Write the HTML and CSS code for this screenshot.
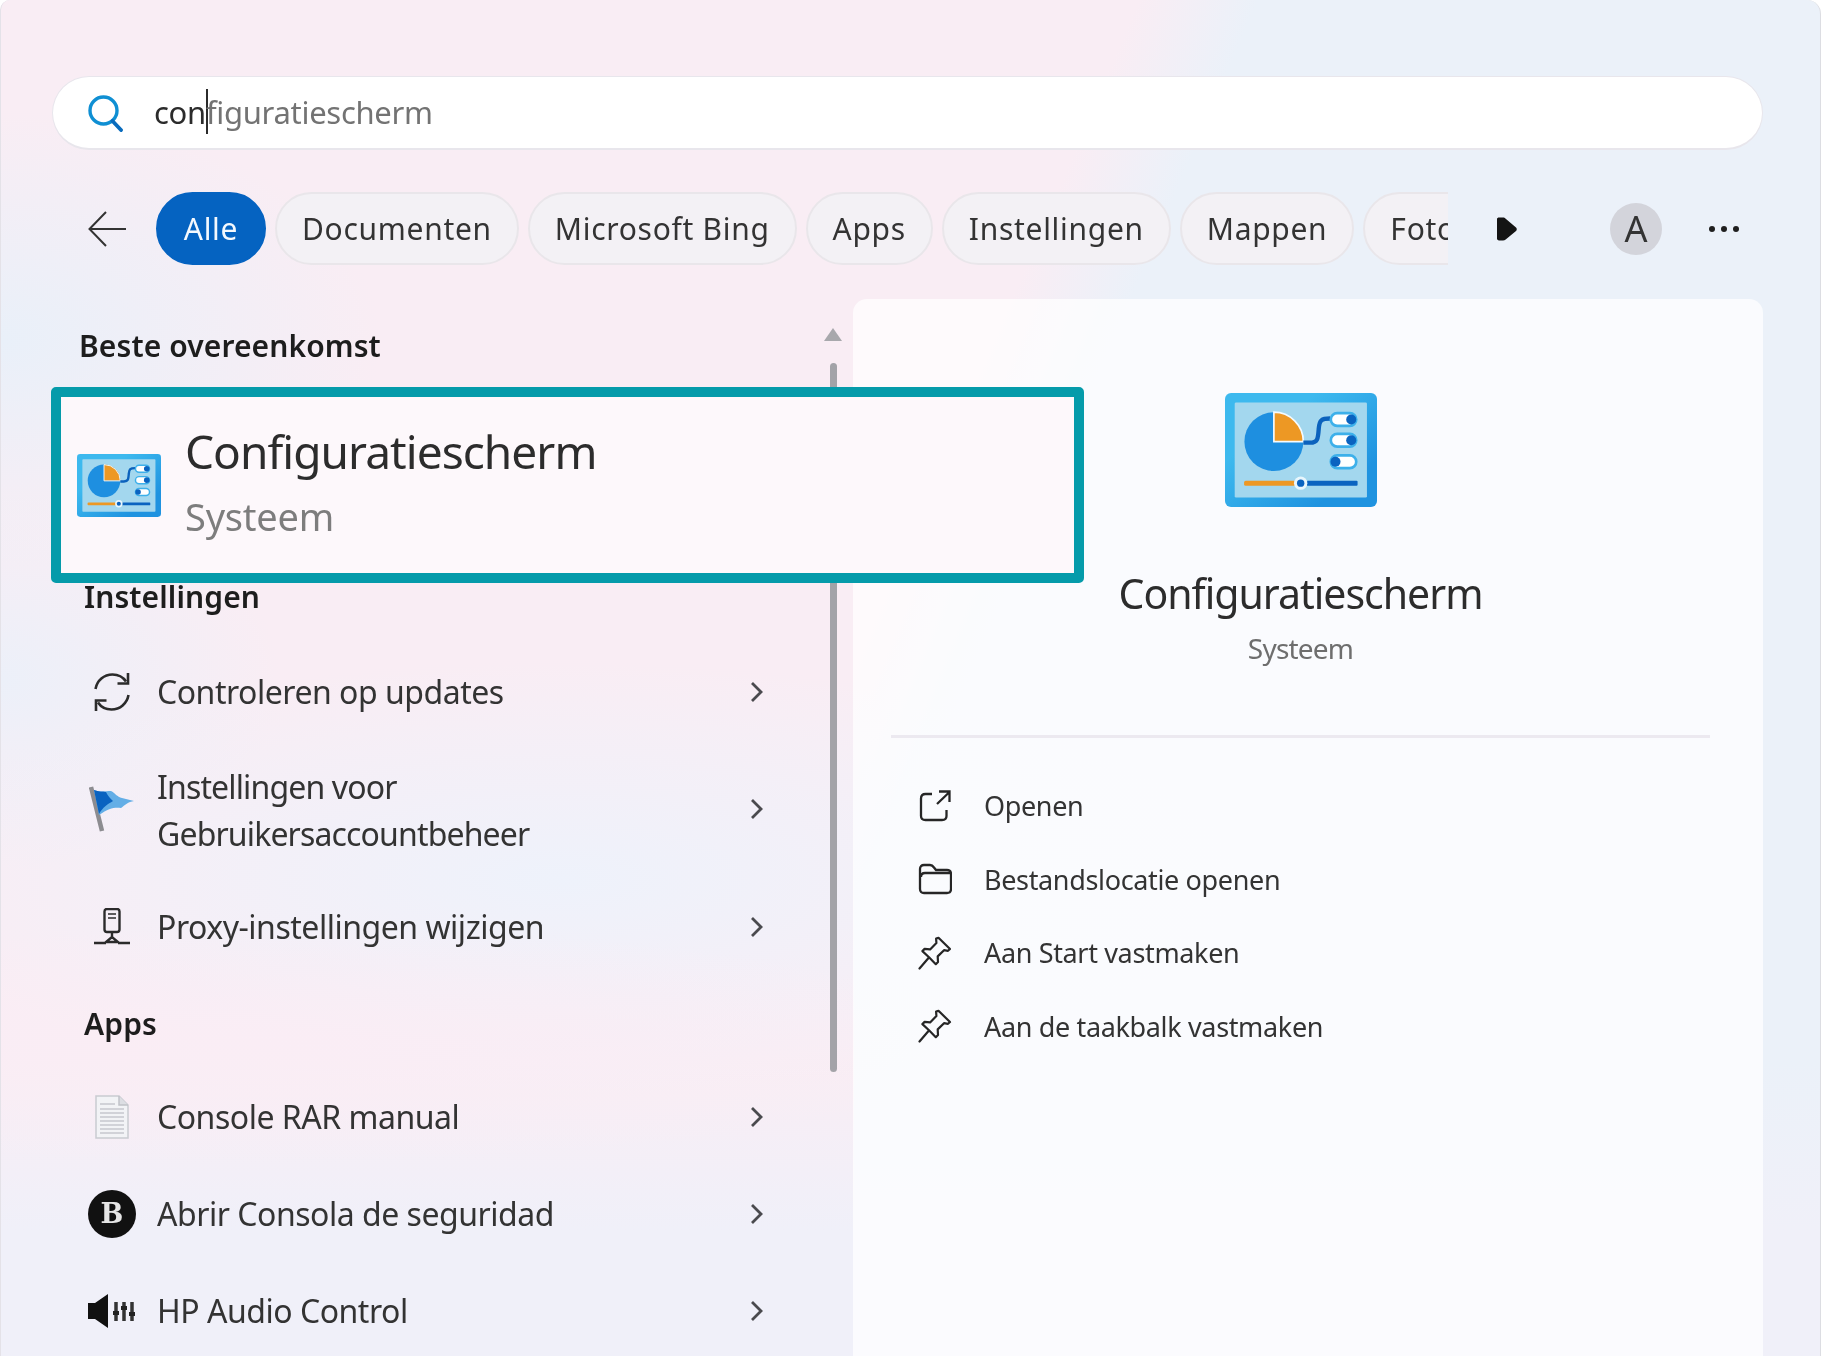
FILE: index.html
```html
<!DOCTYPE html>
<html lang="nl">
<head>
<meta charset="utf-8">
<title>Zoeken</title>
<link rel="stylesheet" href="styles.css">
</head>
<body>
<svg class="defs" width="0" height="0" aria-hidden="true">
  <defs>
    <linearGradient id="cpFrame" x1="0" y1="0" x2="1" y2="1">
      <stop offset="0.3" stop-color="#3db9ee"/><stop offset="0.8" stop-color="#1f93e0"/>
    </linearGradient>
    <symbol id="cp" viewBox="0 0 454 340">
      <rect width="454" height="340" rx="18" fill="url(#cpFrame)"/>
      <rect x="29" y="28" width="395" height="284" rx="4" fill="#a3d7ee"/>
      <circle cx="146" cy="145" r="88" fill="#1e8fe0"/>
      <path d="M146 145V57a88 88 0 0 1 88 88z" fill="#ed9824" stroke="#f4fbff" stroke-width="5"/>
      <path d="M234 148h20c24 0 24-14 26-42 2-26 8-30 34-30" fill="none" stroke="#0b62bd" stroke-width="13"/>
      <g fill="#fff" stroke="#3db0ea" stroke-width="8">
        <rect x="316" y="60" width="76" height="38" rx="19"/>
        <rect x="316" y="122" width="76" height="38" rx="19"/>
        <rect x="316" y="186" width="76" height="38" rx="19"/>
      </g>
      <g fill="#0a63c0">
        <circle cx="377" cy="79" r="15"/><circle cx="377" cy="141" r="15"/><circle cx="330" cy="205" r="15"/>
      </g>
      <rect x="57" y="262" width="155" height="15" rx="5" fill="#ed9824"/>
      <rect x="244" y="262" width="152" height="15" rx="3" fill="#0a63c0"/>
      <circle cx="226" cy="269" r="20" fill="#e8f6fc"/>
      <circle cx="226" cy="269" r="11" fill="#0a63c0"/>
    </symbol>
    <symbol id="pin" viewBox="0 0 34 34">
      <path d="M20.500 1.800 32 13l-2 1.800-4-.6-6.300 6.200.3 5.600-2.200 2.200-6.800-6.900-6.600-6.200 2.200-2.200 5.500.5 6.300-6.400-.3-4.400z" fill="none" stroke="#262626" stroke-width="2.200" stroke-linejoin="round"/>
      <path d="M10.500 22 1.500 32.500" fill="none" stroke="#262626" stroke-width="2.200" stroke-linecap="round"/>
    </symbol>
    <symbol id="chev" viewBox="0 0 15 22">
      <path d="M3 2l9 9-9 9" fill="none" stroke="#4a4a4e" stroke-width="2.800"/>
    </symbol>
  </defs>
</svg>

<div class="window">
  <div class="search">
    <svg class="search-icon" viewBox="0 0 36 38" aria-hidden="true">
      <circle cx="16.500" cy="16.500" r="13.500" fill="none" stroke="#0f8fd3" stroke-width="3.400"/>
      <path d="M25.500 27 34 36" fill="none" stroke="#0a6cbd" stroke-width="3.800" stroke-linecap="round"/>
    </svg>
    <div class="query"><span class="typed">con</span><span class="caret"></span><span class="rest">figuratiescherm</span></div>
  </div>

  <div class="filters">
    <svg class="back" viewBox="0 0 38 36" aria-hidden="true">
      <path d="M18 1 1.500 18 18 35M2 18h36" fill="none" stroke="#333" stroke-width="2"/>
    </svg>
    <div class="chips">
      <span class="chip chip-active">Alle</span>
      <span class="chip">Documenten</span>
      <span class="chip">Microsoft Bing</span>
      <span class="chip">Apps</span>
      <span class="chip">Instellingen</span>
      <span class="chip">Mappen</span>
      <span class="chip">Foto's</span>
    </div>
    <svg class="more-arrow" viewBox="0 0 22 26" aria-hidden="true">
      <path d="M3 1.500h4c1 0 2 .5 2.700 1.300L20 11.500c1 1 1 2.500 0 3.500L9.700 23.500c-.7.7-1.700 1-2.700 1H3c-1 0-2-.8-2-2V3c0-1 1-1.500 2-1.500z" fill="#141414"/>
    </svg>
    <span class="avatar">A</span>
    <span class="dots"><i></i><i></i><i></i></span>
  </div>

  <div class="content">
    <div class="results">
      <div class="scroll-arrow"></div>
      <div class="scroll-thumb"></div>

      <h2 class="heading heading-best">Beste overeenkomst</h2>
      <div class="best">
        <svg class="best-icon" aria-hidden="true"><use href="#cp"/></svg>
        <div class="best-text">
          <div class="best-title">Configuratiescherm</div>
          <div class="best-sub">Systeem</div>
        </div>
      </div>

      <h2 class="heading heading-set">Instellingen</h2>
      <ul class="rows rows-set">
        <li class="row">
          <span class="row-icon">
            <svg class="ic-sync" viewBox="0 0 40 40" aria-hidden="true">
              <path d="M3.500 17C5 8.500 12 2.500 20.500 2.500c5.500 0 10.500 2.500 13.500 7M36.500 23c-1.500 8.500-8.500 14.500-17 14.500-5.500 0-10.500-2.500-13.500-7" fill="none" stroke="#2b2b2b" stroke-width="2.600"/>
              <path d="M36 1v10.500H25.500M4 39V28.500h10.500" fill="none" stroke="#2b2b2b" stroke-width="2.600"/>
            </svg>
          </span>
          <span class="row-text">Controleren op updates</span>
          <svg class="chev" aria-hidden="true"><use href="#chev"/></svg>
        </li>
        <li class="row row-tall">
          <span class="row-icon">
            <svg class="ic-flag" viewBox="0 0 46 46" aria-hidden="true">
              <path d="M2 1l11 44" stroke="#8c8c90" stroke-width="4.500" fill="none"/>
              <path d="M5 4c7 3 12 1 17 1 4 2 6 6 11 7l12 3c-6 1-9 4-13 7-6-1-12 0-22 7z" fill="#63aee6"/>
              <path d="M5 4c5 2 8 1 12 2 2 4 4 6 7 9-5 3-10 6-14 13z" fill="#0a63c0"/>
            </svg>
          </span>
          <span class="row-text row-text-narrow">Instellingen voor<br>Gebruikersaccountbeheer</span>
          <svg class="chev" aria-hidden="true"><use href="#chev"/></svg>
        </li>
        <li class="row">
          <span class="row-icon">
            <svg class="ic-proxy" viewBox="0 0 36 38" aria-hidden="true">
              <rect x="10.500" y="1" width="15" height="23" rx="2.500" fill="none" stroke="#2b2b2b" stroke-width="2.400"/>
              <path d="M14 6h8M14 10h8" stroke="#2b2b2b" stroke-width="1.500"/>
              <path d="M18 24v5M18 29l-6 5h12zM0 35h12M24 35h12" fill="none" stroke="#2b2b2b" stroke-width="2.400"/>
            </svg>
          </span>
          <span class="row-text">Proxy-instellingen wijzigen</span>
          <svg class="chev" aria-hidden="true"><use href="#chev"/></svg>
        </li>
      </ul>

      <h2 class="heading heading-apps">Apps</h2>
      <ul class="rows rows-apps">
        <li class="row">
          <span class="row-icon">
            <svg class="ic-doc" viewBox="0 0 34 44" aria-hidden="true">
              <path d="M1 1h23l9 9v33H1z" fill="#f2f3f6" stroke="#c9cbd1" stroke-width="1.500"/>
              <path d="M24 1v9h9" fill="#dcdee3" stroke="#c0c2c8" stroke-width="1.500"/>
              <path d="M5 9h15M5 14h24M5 18h24M5 22h24M5 26h24M5 30h24M5 34h24M5 38h24" stroke="#c6c8ce" stroke-width="1.500"/>
            </svg>
          </span>
          <span class="row-text">Console RAR manual</span>
          <svg class="chev" aria-hidden="true"><use href="#chev"/></svg>
        </li>
        <li class="row">
          <span class="row-icon"><span class="ic-b">B</span></span>
          <span class="row-text">Abrir Consola de seguridad</span>
          <svg class="chev" aria-hidden="true"><use href="#chev"/></svg>
        </li>
        <li class="row">
          <span class="row-icon">
            <svg class="ic-audio" viewBox="0 0 48 34" aria-hidden="true">
              <path d="M0 9h7L20 0v34L7 25H0z" fill="#111"/>
              <path d="M28 8v19M36 8v19M44 8v19" stroke="#333" stroke-width="3.500"/>
              <path d="M25 19h6M33 14h6M41 20h6" stroke="#222" stroke-width="4"/>
            </svg>
          </span>
          <span class="row-text">HP Audio Control</span>
          <svg class="chev" aria-hidden="true"><use href="#chev"/></svg>
        </li>
      </ul>
    </div>

    <aside class="detail">
      <div class="detail-head">
        <svg class="detail-icon" aria-hidden="true"><use href="#cp"/></svg>
        <div class="detail-title">Configuratiescherm</div>
        <div class="detail-sub">Systeem</div>
      </div>
      <ul class="actions">
        <li class="action">
          <svg class="action-icon" viewBox="0 0 34 34" aria-hidden="true">
            <path d="M14 5H7.500C4.500 5 3 6.500 3 9.500V27c0 2.500 1.500 4 4.500 4H24c3 0 4.500-1.500 4.500-4v-6M19 15 31.500 3M21 2.500h10.500V13" fill="none" stroke="#262626" stroke-width="2.300"/>
          </svg>
          <span>Openen</span>
        </li>
        <li class="action">
          <svg class="action-icon" viewBox="0 0 34 34" aria-hidden="true">
            <path d="M2 27V7c0-2.500 1.500-4 4-4h6c2 0 3 1 4 2.500L18 8h11c2.500 0 4 1.500 4 4v15c0 2.500-1.500 4-4 4H6c-2.500 0-4-1.500-4-4z" fill="none" stroke="#262626" stroke-width="2.300"/>
            <path d="M3 15c0-2.500 1.500-4 4-4h26" fill="none" stroke="#262626" stroke-width="2.300"/>
          </svg>
          <span>Bestandslocatie openen</span>
        </li>
        <li class="action">
          <svg class="action-icon" aria-hidden="true"><use href="#pin"/></svg>
          <span>Aan Start vastmaken</span>
        </li>
        <li class="action">
          <svg class="action-icon" aria-hidden="true"><use href="#pin"/></svg>
          <span>Aan de taakbalk vastmaken</span>
        </li>
      </ul>
    </aside>
  </div>
</div>
</body>
</html>
```

FILE: styles.css
```css
* { box-sizing: border-box; }

html, body {
  margin: 0;
  padding: 0;
  background: #fff;
}

.defs { position: absolute; }

.window {
  width: 1821px;
  height: 1356px;
  overflow: hidden;
  padding: 76px 57px 0 51px;
  border-radius: 10px 14px 0 0;
  border-left: 1px solid #e4e2e8;
  border-right: 1px solid #dcdde2;
  filter: blur(0.4px);
  font-family: "Noto Sans", "Open Sans", sans-serif;
  color: #262626;
  background:
    radial-gradient(ellipse 380px 230px at 0 340px, #e9f0f9 0%, rgba(233, 240, 249, 0) 100%),
    radial-gradient(ellipse 760px 120px at 260px 1045px, #faedf5 0%, rgba(250, 237, 245, 0) 100%),
    radial-gradient(ellipse 700px 220px at 560px 880px, #eef2fb 0%, rgba(238, 242, 251, 0) 100%),
    radial-gradient(ellipse 280px 190px at 0 680px, #ecf0f9 0%, rgba(236, 240, 249, 0) 100%),
    linear-gradient(180deg, rgba(240, 240, 249, 0) 1060px, #f0f0f9 1230px),
    linear-gradient(180deg, #f9edf4 0, #f9edf4 100%) left / 853px 100% no-repeat,
    linear-gradient(113deg, #f9edf4 0, #f9edf4 47.500%, #ebf1f9 52.500%, #ebf1f9 100%);
}

/* Search box */
.search {
  display: flex;
  align-items: center;
  height: 74px;
  padding: 0 0 2px 34px;
  background: #fff;
  border: 1px solid #e8e6ec;
  border-bottom-width: 2px;
  border-radius: 37px;
}

.search-icon { width: 36px; height: 38px; flex: none; margin-top: 2px; }

.query {
  display: flex;
  align-items: center;
  margin-left: 31px;
  font-size: 31px;
  letter-spacing: -0.3px;
}

.typed { color: #2b2b2b; }
.rest { color: #737373; }

.caret {
  width: 2px;
  height: 45px;
  background: #2b2b2b;
  margin-right: -2px;
}

/* Filter row */
.filters {
  display: flex;
  align-items: center;
  height: 73px;
  margin-top: 42px;
}

.back { width: 38px; height: 36px; margin-left: 36px; flex: none; }

.chips {
  display: flex;
  gap: 9px;
  width: 1292px;
  margin-left: 30px;
  overflow: hidden;
  flex: none;
}

.chip {
  display: flex;
  align-items: center;
  flex: none;
  height: 73px;
  padding: 0 25px;
  background: #f3f1f5;
  border: 2px solid #e9e6ea;
  border-radius: 37px;
  font-size: 30px;
  letter-spacing: 0.7px;
  color: #333;
}

.chip-active {
  width: 110px;
  justify-content: center;
  padding: 0;
  background: #0563c1;
  border-color: #0563c1;
  color: #f4f9fe;
}

.more-arrow { width: 22px; height: 26px; margin-left: 48px; flex: none; }

.avatar {
  display: flex;
  align-items: center;
  justify-content: center;
  width: 52px;
  height: 52px;
  margin-left: 92px;
  border-radius: 50%;
  background: #d3d4db;
  font-size: 36px;
  color: #333;
  flex: none;
}

.dots { display: flex; gap: 6px; margin-left: 47px; }
.dots i { width: 6px; height: 6px; border-radius: 50%; background: #1f1f1f; }

/* Two columns */
.content {
  display: flex;
  margin-top: 34px;
  height: 1057px;
}

.results {
  position: relative;
  width: 801px;
  flex: none;
}

.scroll-arrow {
  position: absolute;
  left: 772px;
  top: 29px;
  width: 0;
  height: 0;
  border: 9px solid transparent;
  border-top: 0;
  border-bottom: 13px solid #a8a8ac;
}

.scroll-thumb {
  position: absolute;
  left: 778px;
  top: 64px;
  width: 7px;
  height: 709px;
  border-radius: 4px;
  background: #a3a3a8;
}

.heading {
  margin: 0;
  font-size: 30px;
  line-height: 28px;
  font-weight: 600;
  color: #1d1d1d;
  letter-spacing: 0.1px;
}

.heading-best { padding: 33px 0 0 27px; height: 88px; }
.heading-set { padding-left: 32px; }
.heading-apps { padding-left: 32px; margin-top: 35px; }

.best {
  position: relative;
  z-index: 1;
  display: flex;
  align-items: center;
  gap: 24px;
  width: 1033px;
  height: 196px;
  margin-left: -1px;
  padding: 0 0 3px 16px;
  background: #fdf8fb;
  border: 10px solid #059baa;
  border-radius: 5px;
}

.best-icon { width: 84px; height: 63px; flex: none; margin-top: 3px; }

.best-title { font-size: 46px; line-height: 64px; letter-spacing: -0.95px; color: #2c2c2c; }
.best-sub { font-size: 38px; line-height: 66px; letter-spacing: -0.2px; color: #7d7d7d; }

.rows { list-style: none; margin: 0; padding: 0; }
.rows-set { margin-top: 32px; }
.rows-apps { margin-top: 30px; }

.row {
  display: flex;
  align-items: center;
  height: 97px;
  padding: 0 89px 0 32px;
}

.row-tall { height: 138px; }

.row-icon {
  display: flex;
  align-items: center;
  justify-content: center;
  width: 56px;
  flex: none;
  margin-right: 17px;
}

.row-text {
  flex: 1;
  font-size: 32px;
  line-height: 47px;
  letter-spacing: -0.48px;
  color: #333;
}

.row-text-narrow { letter-spacing: -0.85px; padding-top: 2px; }

.chev { width: 15px; height: 22px; flex: none; }

.ic-sync { width: 40px; height: 40px; }
.ic-flag { width: 46px; height: 46px; }
.ic-proxy { width: 36px; height: 38px; }
.ic-doc { width: 34px; height: 44px; }
.ic-audio { width: 48px; height: 34px; }

.ic-b {
  display: flex;
  align-items: center;
  justify-content: center;
  width: 48px;
  height: 48px;
  border-radius: 50%;
  background: #111;
  color: #e6e6e6;
  font-family: "DejaVu Serif", serif;
  font-size: 27px;
  font-weight: 700;
}

/* Detail panel */
.detail {
  flex: 1;
  padding: 0 53px 0 38px;
  background: rgba(255, 255, 255, 0.72);
  border-radius: 14px 14px 0 0;
}

.detail-head {
  display: flex;
  flex-direction: column;
  align-items: center;
  height: 439px;
  padding-top: 94px;
  border-bottom: 3px solid #ece9f0;
}

.detail-icon { width: 152px; height: 114px; flex: none; }

.detail-title {
  margin-top: 58px;
  font-size: 41px;
  line-height: 56px;
  letter-spacing: -1px;
  color: #2c2c2c;
}

.detail-sub {
  margin-top: 7px;
  font-size: 28px;
  line-height: 40px;
  letter-spacing: -0.8px;
  color: #6e6e6e;
}

.actions { list-style: none; margin: 31px 0 0; padding: 0 0 0 27px; }

.action {
  display: flex;
  align-items: center;
  height: 73.500px;
  font-size: 27px;
  letter-spacing: -0.35px;
  color: #333;
}

.action-icon { width: 34px; height: 34px; flex: none; margin-right: 32px; }
```
